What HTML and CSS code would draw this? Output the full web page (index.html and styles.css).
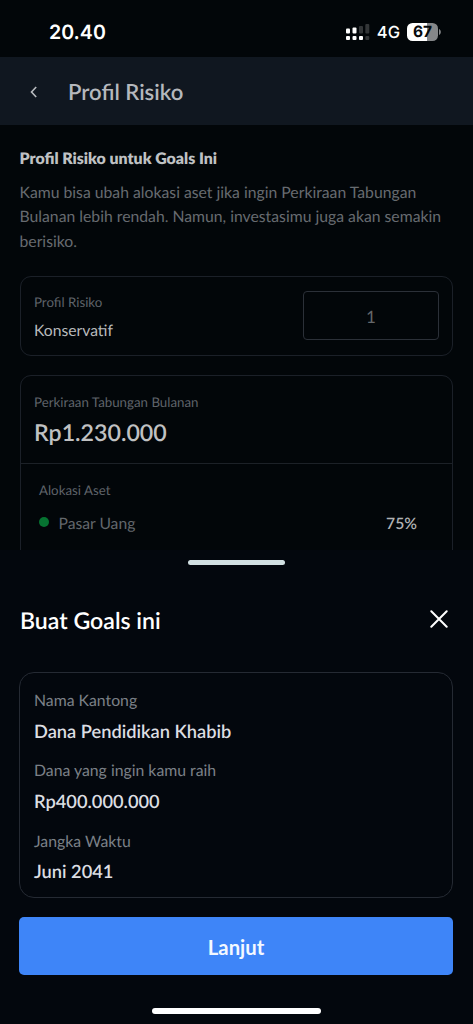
FILE: index.html
```html
<!DOCTYPE html>
<html lang="id">
<head>
<meta charset="utf-8">
<meta name="viewport" content="width=device-width, initial-scale=1">
<title>Profil Risiko</title>
<link rel="stylesheet" href="styles.css">
</head>
<body>
<div class="screen">
  <div class="status">
    <span class="time">20.40</span>
    <div class="status-icons">
      <svg class="signal" width="24" height="17" viewBox="0 0 24 17" fill="#fff">
        <rect x="0" y="4.5" width="4" height="5" rx="1"/>
        <rect x="6.5" y="3.5" width="4" height="6" rx="1"/>
        <rect x="13" y="2" width="4" height="7.5" rx="1" fill="#333638"/>
        <rect x="19.3" y="0" width="4" height="9.5" rx="1" fill="#333638"/>
        <rect x="0" y="12" width="4" height="4" rx="1"/>
        <rect x="6.5" y="12" width="4" height="4" rx="1"/>
        <rect x="13" y="12" width="4" height="4" rx="1"/>
        <rect x="19.3" y="12" width="4" height="4" rx="1" fill="#333638"/>
      </svg>
      <span class="network">4G</span>
      <div class="battery"><span>67</span></div>
      <svg class="battery-cap" width="2" height="6" viewBox="0 0 2 6" fill="#858789"><path d="M0 0C2.4 1 2.4 5 0 6Z"/></svg>
    </div>
  </div>
  <header class="header">
    <svg class="back" width="8" height="12" viewBox="0 0 8 12" fill="none" stroke="#b9bcc0" stroke-width="1.6"><path d="M6.2 1 1.5 6l4.7 5"/></svg>
    <h1 class="title">Profil Risiko</h1>
  </header>
  <main class="content">
    <h2 class="heading">Profil Risiko untuk Goals Ini</h2>
    <p class="intro">Kamu bisa ubah alokasi aset jika ingin Perkiraan Tabungan<br>Bulanan lebih rendah. Namun, investasimu juga akan semakin<br>berisiko.</p>
    <section class="card risk">
      <div>
        <div class="caption">Profil Risiko</div>
        <div class="risk-name">Konservatif</div>
      </div>
      <div class="risk-input">1</div>
    </section>
    <section class="card estimate">
      <div class="estimate-top">
        <div class="caption">Perkiraan Tabungan Bulanan</div>
        <div class="amount">Rp1.230.000</div>
      </div>
      <div class="allocation">
        <div class="caption">Alokasi Aset</div>
        <div class="asset">
          <i class="dot"></i><span class="asset-name">Pasar Uang</span><span class="percent">75%</span>
        </div>
      </div>
    </section>
  </main>
  <section class="sheet">
    <div class="grabber"></div>
    <div class="sheet-head">
      <h2 class="sheet-title">Buat Goals ini</h2>
      <svg width="18" height="18" viewBox="0 0 18 18" fill="none" stroke="#fff" stroke-width="2" stroke-linecap="round"><path d="m1.3 1.3 15.4 15.4M16.7 1.3 1.3 16.7"/></svg>
    </div>
    <dl class="details">
      <dt>Nama Kantong</dt><dd>Dana Pendidikan Khabib</dd>
      <dt>Dana yang ingin kamu raih</dt><dd>Rp400.000.000</dd>
      <dt>Jangka Waktu</dt><dd>Juni 2041</dd>
    </dl>
    <button class="next">Lanjut</button>
    <div class="home"></div>
  </section>
</div>
</body>
</html>
```
FILE: styles.css
```css
* { box-sizing: border-box; margin: 0; padding: 0; }
body { background: #020609; font-family: Lato, "Open Sans", sans-serif; text-rendering: geometricPrecision; }
.screen { width: 473px; height: 1024px; display: flex; flex-direction: column; overflow: hidden; background: #020609; }
.status { height: 57px; flex: none; display: flex; justify-content: space-between; align-items: flex-start; padding: 20px 32px 0 49px; font-family: Inter, sans-serif; color: #fff; }
.time { font-size: 19.6px; line-height: 24px; font-weight: 600; }
.status-icons { display: flex; align-items: center; height: 24px; }
.network { font-size: 16.5px; font-weight: 500; margin: 0 7px 0 7px; line-height: 24px; }
.battery { width: 31px; height: 18px; border-radius: 5.5px; background: linear-gradient(90deg, #fff 66%, #858789 66%); color: #05090c; font-size: 15.5px; line-height: 18px; font-weight: 700; text-align: center; }
.battery-cap { margin-left: 1px; }
.header { height: 68px; flex: none; display: flex; align-items: center; background: #101720; padding: 1px 30px 0; }
.title { font-size: 22.1px; line-height: 28px; font-weight: 600; color: #b5b8bd; margin-left: 30px; }
.content { height: 425px; flex: none; overflow: hidden; padding: 24px 20px 0 19.5px; }
.heading { font-size: 15.9px; line-height: 20px; font-weight: 800; color: #bfc1c3; }
.intro { margin-top: 12px; font-size: 15.75px; line-height: 24.3px; color: #676b70; white-space: nowrap; }
.card { border: 1.5px solid #1b2028; border-radius: 11px; }
.risk { height: 80px; margin-top: 22px; display: flex; justify-content: space-between; padding: 14px 13px 0 13.5px; }
.caption { font-size: 13.3px; line-height: 18px; color: #5f6369; }
.risk > div:first-child { padding-top: 2px; }
.risk-name { font-size: 15.7px; line-height: 20px; color: #b8babc; margin-top: 10px; }
.risk-input { width: 136px; height: 49px; border: 1.5px solid #2b3038; border-radius: 4px; font-size: 17px; line-height: 50px; color: #64676b; text-align: center; }
.estimate { margin-top: 19px; height: 240px; }
.estimate-top { height: 88px; padding: 17px 13.5px 0; border-bottom: 1.5px solid #1c2127; }
.amount { font-size: 23.2px; line-height: 30px; font-weight: 600; color: #c0c1c2; margin-top: 6px; }
.allocation { padding: 17px 35px 0 18.5px; }
.asset { display: flex; align-items: center; margin-top: 15px; font-size: 15.7px; line-height: 20px; }
.dot { width: 10px; height: 10px; border-radius: 50%; background: #067331; margin-top: -4px; }
.asset-name { color: #63676c; margin-left: 9.5px; }
.percent { margin-left: auto; color: #b0b2b4; font-weight: 600; }
.sheet { flex: 1; background: #03070d; padding: 10px 20px 0 19px; }
.grabber { width: 97px; height: 5px; border-radius: 3px; background: #d2e0e2; margin: 0 auto; }
.sheet-head { display: flex; justify-content: space-between; align-items: center; margin-top: 40px; padding: 0 5px 0 1px; height: 28px; }
.sheet-title { font-size: 23.1px; line-height: 28px; font-weight: 600; color: #fff; padding-top: 1px; }
.details { margin-top: 39px; height: 226px; border: 1.5px solid #252a33; border-radius: 15px; padding: 18px 14px 0; }
.details dt { font-size: 15.8px; line-height: 20px; color: #7b8087; }
.details dd { font-size: 18.25px; line-height: 24px; font-weight: 600; color: #dcdee2; margin: 7.5px 0 18.8px; }
.next { display: block; width: 434px; height: 58px; margin-top: 19px; border: 0; border-radius: 5px; background: #3e85f8; color: #f3f8ff; font: 700 20.3px/58px Lato, sans-serif; padding-top: 1px; }
.home { width: 169px; height: 6px; border-radius: 3px; background: #fff; margin: 33px auto 0; }
```
